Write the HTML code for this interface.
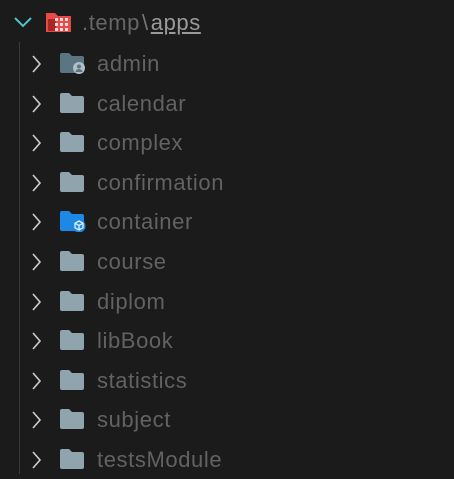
<!DOCTYPE html><html><head><style>
body{margin:0;width:454px;height:474px;background:#1b1b1b;overflow:hidden;font-family:"Liberation Sans","DejaVu Sans",sans-serif;}
.row{position:absolute;left:0;height:40px;width:454px;}
.t{position:absolute;left:97px;top:8px;font-size:22px;letter-spacing:0.6px;color:#626262;line-height:25px;}
.ch{position:absolute;left:31px;top:11px;}
.f{position:absolute;left:60px;top:10px;}
.guide{position:absolute;left:19px;top:42px;width:1px;height:432px;background:#3a3a3a;}
</style></head><body>
<div class="row" style="top:2px">
<svg style="position:absolute;left:13px;top:13px" width="20" height="14"><path d="M2 3 L10 11 L18 3" stroke="#4ec3c3" stroke-width="2" fill="none"/></svg>
<svg style="position:absolute;left:45px;top:9px" width="28" height="24"><path d="M1 2h9l3 3h13v16H1z" fill="#e84a4a"/><path d="M3 8h6l2-2h0v14H3z" fill="#a82828"/><g fill="#fbdcdc"><rect x="10" y="7" width="3" height="3"/><rect x="15" y="7" width="3" height="3"/><rect x="20" y="7" width="3" height="3"/><rect x="10" y="12" width="3" height="3"/><rect x="15" y="12" width="3" height="3"/><rect x="20" y="12" width="3" height="3"/><rect x="10" y="17" width="3" height="3"/><rect x="15" y="17" width="3" height="3"/><rect x="20" y="17" width="3" height="3"/></g></svg>
<div class="t" style="left:82px;top:8px;color:#666">.temp<span style="color:#777;margin:0 2px">\</span><span style="color:#9a9a9a;text-decoration:underline">apps</span></div>
</div>
<div class="guide"></div>
<div id="list"></div>
<script>
var n=["admin","calendar","complex","confirmation","container","course","diplom","libBook","statistics","subject","testsModule"];
var h="";
n.forEach(function(s,i){
var top=43+i*39.6;
var icon='<path d="M0 2a2 2 0 0 1 2-2h7l3 3h10a2 2 0 0 1 2 2v13a2 2 0 0 1-2 2H2a2 2 0 0 1-2-2z" fill="'+(s=="container"?"#1e88e5":s=="admin"?"#5b7583":"#90a4ae")+'"/>';
if(s=="admin")icon+='<circle cx="19" cy="15" r="6" fill="#b0bec5"/><circle cx="19" cy="13.5" r="2" fill="#5b7583"/><path d="M15.5 19a3.5 3 0 0 1 7 0z" fill="#5b7583"/>';
if(s=="container")icon+='<circle cx="19" cy="15" r="6.5" fill="#1e88e5"/><path d="M19 10l4 2.2v4.6L19 19l-4-2.2v-4.6zM15 12.2l4 2.2 4-2.2M19 14.4V19" stroke="#e3f2fd" stroke-width="1.3" fill="none"/>';
h+='<div class="row" style="top:'+top+'px"><svg class="ch" width="12" height="20"><path d="M2 2l7 8-7 8" stroke="#cfcfcf" stroke-width="1.6" fill="none"/></svg><svg class="f" width="26" height="21">'+icon+'</svg><div class="t">'+s+'</div></div>';
});
document.getElementById("list").innerHTML=h;
</script>
</body></html>
